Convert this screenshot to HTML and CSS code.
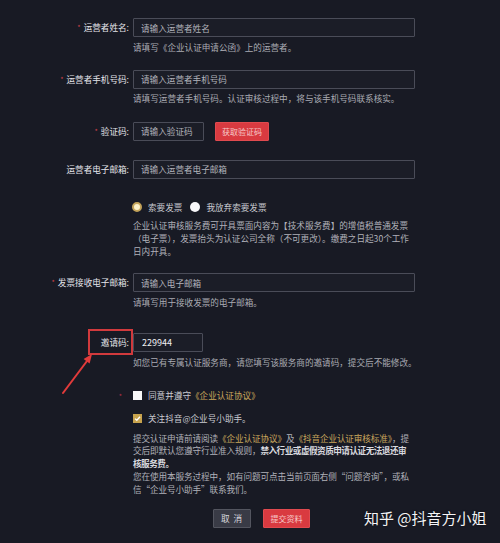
FILE: index.html
```html
<!DOCTYPE html>
<html lang="zh-CN">
<head>
<meta charset="utf-8">
<title>企业认证</title>
<link rel="stylesheet" href="styles.css">
</head>
<body>
<div class="form">
  <div class="row r1">
    <div class="label"><span class="star">*</span>运营者姓名:</div>
    <div class="field">
      <input class="input wide" placeholder="请输入运营者姓名">
      <div class="help">请填写《企业认证申请公函》上的运营者。</div>
    </div>
  </div>
  <div class="row r2">
    <div class="label"><span class="star">*</span>运营者手机号码:</div>
    <div class="field">
      <input class="input wide" placeholder="请输入运营者手机号码">
      <div class="help">请填写运营者手机号码。认证审核过程中，将与该手机号码联系核实。</div>
    </div>
  </div>
  <div class="row r3">
    <div class="label"><span class="star">*</span>验证码:</div>
    <div class="field inline">
      <input class="input short" placeholder="请输入验证码">
      <button class="btn red code">获取验证码</button>
    </div>
  </div>
  <div class="row r4">
    <div class="label">运营者电子邮箱:</div>
    <div class="field">
      <input class="input wide" placeholder="请输入运营者电子邮箱">
    </div>
  </div>
  <div class="row r5">
    <div class="label"></div>
    <div class="field inline radios">
      <span class="radio on"></span><span class="opt first">索要发票</span>
      <span class="radio"></span><span class="opt">我放弃索要发票</span>
    </div>
  </div>
  <div class="row r6">
    <div class="label"></div>
    <div class="field para">企业认证审核服务费可开具票面内容为【技术服务费】的增值税普通发票<br>（电子票），发票抬头为认证公司全称（不可更改）。缴费之日起30个工作<br>日内开具。</div>
  </div>
  <div class="row r7">
    <div class="label"><span class="star">*</span>发票接收电子邮箱:</div>
    <div class="field">
      <input class="input wide" placeholder="请输入电子邮箱">
      <div class="help">请填写用于接收发票的电子邮箱。</div>
    </div>
  </div>
  <div class="row r8">
    <div class="label invite">邀请码:
      <span class="mark"></span>
      <svg class="arrow" width="45" height="50" viewBox="0 0 45 50">
        <line x1="8" y1="45" x2="32" y2="13" stroke="#e23b3b" stroke-width="2" stroke-linecap="round"/>
        <polygon points="37,6 34.6,15.6 28.6,11.1" fill="#e23b3b"/>
      </svg>
    </div>
    <div class="field">
      <input class="input short code-val" value="229944">
      <div class="help">如您已有专属认证服务商，请您填写该服务商的邀请码，提交后不能修改。</div>
    </div>
  </div>
  <div class="row r9">
    <div class="label"><span class="dot">*</span></div>
    <div class="field inline">
      <span class="check"></span><span class="opt">同意并遵守<span class="gold">《企业认证协议》</span></span>
    </div>
  </div>
  <div class="row r10">
    <div class="label"></div>
    <div class="field inline">
      <span class="check on"><svg width="9" height="9" viewBox="0 0 9 9"><path d="M2 4.6 L3.8 6.3 L7 2.8" fill="none" stroke="#fff" stroke-width="1.3"/></svg></span><span class="opt">关注抖音@企业号小助手。</span>
    </div>
  </div>
  <div class="row r11">
    <div class="label"></div>
    <div class="field para tight">提交认证申请前请阅读<span class="gold">《企业认证协议》</span>及<span class="gold">《抖音企业认证审核标准》</span>，提<br>交后即默认您遵守行业准入规则，<b>禁入行业或虚假资质申请认证无法退还审<br>核服务费。</b><br>您在使用本服务过程中，如有问题可点击当前页面右侧“问题咨询”，或私<br>信“企业号小助手”联系我们。</div>
  </div>
  <div class="row r12">
    <div class="label"></div>
    <div class="field inline buttons">
      <button class="btn grey">取 消</button>
      <button class="btn red submit">提交资料</button>
    </div>
  </div>
</div>
<div class="watermark">知乎 @抖音方小姐</div>
</body>
</html>
```
FILE: styles.css
```css
html, body {
  margin: 0;
  padding: 0;
  background: #181a24;
  height: 100%;
}
body {
  font-family: "Noto Sans CJK SC", "Noto Sans", sans-serif;
  font-size: 8.6px;
  color: #b4b5bd;
  position: relative;
  overflow: hidden;
}
.form {
  padding-top: 18px;
}
.row {
  display: flex;
  align-items: flex-start;
}
.label {
  width: 133px;
  flex: none;
  box-sizing: border-box;
  padding-right: 4px;
  text-align: right;
  height: 19px;
  line-height: 19px;
  color: #e4e4ea;
  white-space: nowrap;
}
.star {
  color: #d2434c;
  font-size: 7px;
  margin-right: 3px;
  vertical-align: 1px;
}
.dot {
  color: #b8334a;
  font-size: 7px;
  padding-right: 5px;
}
.field {
  display: flex;
  flex-direction: column;
  align-items: flex-start;
}
.field.inline {
  flex-direction: row;
  align-items: center;
}
.input {
  box-sizing: border-box;
  height: 19px;
  margin: 0;
  padding: 0 0 0 7px;
  border: 1px solid #4a4c58;
  border-radius: 1px;
  background: #1b1d27;
  color: #e8e8ee;
  font: inherit;
  outline: none;
}
.input::placeholder {
  color: #b2b3bb;
  opacity: 1;
}
.wide { width: 282px; }
.short { width: 71px; }
.code-val { width: 70px; font-size: 9px; padding-left: 8px; color: #f0f0f4; }
.help {
  margin-top: 3.5px;
  line-height: 13px;
  color: #aaabb3;
  white-space: nowrap;
}
.btn {
  box-sizing: border-box;
  height: 19px;
  margin: 0;
  padding: 0;
  font: inherit;
  border-radius: 1px;
  cursor: pointer;
}
.btn.red {
  background: #d93a40;
  border: 1px solid #e04a4f;
  color: #f6c9c9;
}
.btn.code {
  width: 54px;
  margin-left: 11px;
  font-size: 8px;
}
.btn.grey {
  width: 38px;
  background: #393b46;
  border: 1px solid #53555f;
  color: #d6d7de;
  letter-spacing: 1px;
}
.btn.submit {
  width: 47px;
  margin-left: 12px;
  font-size: 8px;
}
.buttons {
  padding-left: 80px;
}
.r1 { margin-bottom: 16px; }
.r2 { margin-bottom: 16.5px; }
.r3 { margin-bottom: 19px; }
.r4 { margin-bottom: 22px; }
.r5 { margin-bottom: 5px; }
.r6 { margin-bottom: 15.5px; }
.r7 { margin-bottom: 24.5px; }
.r8 { margin-bottom: 20px; }
.r9 { margin-bottom: 10px; }
.r10 { margin-bottom: 7px; }
.r11 { margin-bottom: 13.5px; }
.r5 .label, .r6 .label, .r9 .label, .r10 .label, .r11 .label {
  height: 13px;
  line-height: 13px;
}
.r9 .label { padding-right: 6px; }
.radios {
  height: 13px;
}
.radio {
  box-sizing: border-box;
  width: 10px;
  height: 10px;
  border-radius: 50%;
  background: #f7f7f9;
  flex: none;
  margin-left: -1px;
}
.radio.on {
  background: #fbf0c8;
  border: 2px solid #c2a259;
}
.opt {
  margin-left: 6px;
  line-height: 13px;
  color: #c9cad1;
  white-space: nowrap;
}
.opt.first { margin-right: 9px; }
.para {
  display: block;
  line-height: 13px;
  color: #b0b1b9;
  white-space: nowrap;
}
.para.tight {
  line-height: 12.8px;
  letter-spacing: -0.1px;
}
.para b {
  color: #d8d9df;
  font-weight: bold;
  letter-spacing: -0.5px;
}
.gold {
  color: #c9a75c;
}
.check {
  box-sizing: border-box;
  width: 9px;
  height: 9px;
  background: #f8f8f8;
  flex: none;
  display: flex;
  align-items: center;
  justify-content: center;
}
.check.on {
  background: #c7a34d;
}
.invite {
  position: relative;
}
.mark {
  position: absolute;
  left: 88px;
  top: -4px;
  width: 45px;
  height: 26px;
  box-sizing: border-box;
  border: 2px solid #d13a3d;
}
.arrow {
  position: absolute;
  left: 55px;
  top: 15px;
}
.watermark {
  position: absolute;
  left: 364px;
  top: 507px;
  font-size: 15px;
  line-height: 22px;
  color: #f4f4f6;
  text-shadow: 0 0 2px rgba(0, 0, 0, 0.6);
  white-space: nowrap;
}
```
